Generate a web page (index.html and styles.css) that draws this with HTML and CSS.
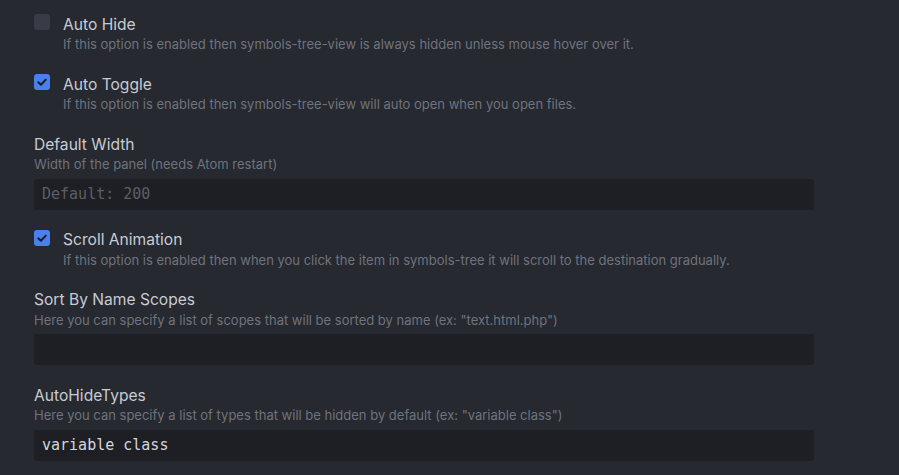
FILE: index.html
```html
<!DOCTYPE html>
<html>
<head>
<meta charset="utf-8">
<link rel="stylesheet" href="styles.css">
</head>
<body>
<div class="settings">
  <div class="item check-item">
    <span class="box"></span>
    <div class="text">
      <div class="title">Auto Hide</div>
      <div class="desc">If this option is enabled then symbols-tree-view is always hidden unless mouse hover over it.</div>
    </div>
  </div>
  <div class="item check-item">
    <span class="box on"><svg viewBox="0 0 16 16" width="16" height="16"><path d="M4.3 8.2 L6.9 10.7 L11.8 5.6" fill="none" stroke="#1b1d22" stroke-width="2" stroke-linecap="round" stroke-linejoin="round"/></svg></span>
    <div class="text">
      <div class="title">Auto Toggle</div>
      <div class="desc">If this option is enabled then symbols-tree-view will auto open when you open files.</div>
    </div>
  </div>
  <div class="item">
    <div class="title">Default Width</div>
    <div class="desc">Width of the panel (needs Atom restart)</div>
    <div class="input placeholder">Default: 200</div>
  </div>
  <div class="item check-item">
    <span class="box on"><svg viewBox="0 0 16 16" width="16" height="16"><path d="M4.3 8.2 L6.9 10.7 L11.8 5.6" fill="none" stroke="#1b1d22" stroke-width="2" stroke-linecap="round" stroke-linejoin="round"/></svg></span>
    <div class="text">
      <div class="title">Scroll Animation</div>
      <div class="desc">If this option is enabled then when you click the item in symbols-tree it will scroll to the destination gradually.</div>
    </div>
  </div>
  <div class="item">
    <div class="title">Sort By Name Scopes</div>
    <div class="desc">Here you can specify a list of scopes that will be sorted by name (ex: "text.html.php")</div>
    <div class="input"></div>
  </div>
  <div class="item">
    <div class="title">AutoHideTypes</div>
    <div class="desc">Here you can specify a list of types that will be hidden by default (ex: "variable class")</div>
    <div class="input">variable class</div>
  </div>
</div>
</body>
</html>
```
FILE: styles.css
```css
html, body {
  margin: 0;
  padding: 0;
  background: #262930;
  height: 100%;
  overflow: hidden;
}
.settings {
  padding: 14.5px 0 0 34px;
  width: 780px;
  font-family: Inter, "Noto Sans", sans-serif;
}
.item {
  margin-bottom: 20.5px;
}
.check-item {
  display: flex;
  gap: 13px;
  align-items: flex-start;
  margin-bottom: 21.5px;
}
.box {
  flex: none;
  width: 16px;
  height: 16px;
  margin-top: -0.5px;
  border-radius: 3px;
  background: #393c46;
  display: block;
}
.box.on {
  background: #4a7ff0;
}
.box svg { display: block; }
.title {
  font-size: 15.6px;
  line-height: 20px;
  color: #c8cbd3;
  white-space: nowrap;
}
.desc {
  margin-top: 0.5px;
  font-size: 13px;
  line-height: 18px;
  color: #6f737d;
  white-space: nowrap;
}
.input {
  margin-top: 5.5px;
  height: 31px;
  box-sizing: border-box;
  background: #1e1f24;
  border-radius: 3px;
  padding: 0 8px;
  font-family: "DejaVu Sans Mono", monospace;
  font-size: 15px;
  line-height: 31px;
  color: #d3d6dc;
}
.input.placeholder {
  color: #5b5e66;
}
```
